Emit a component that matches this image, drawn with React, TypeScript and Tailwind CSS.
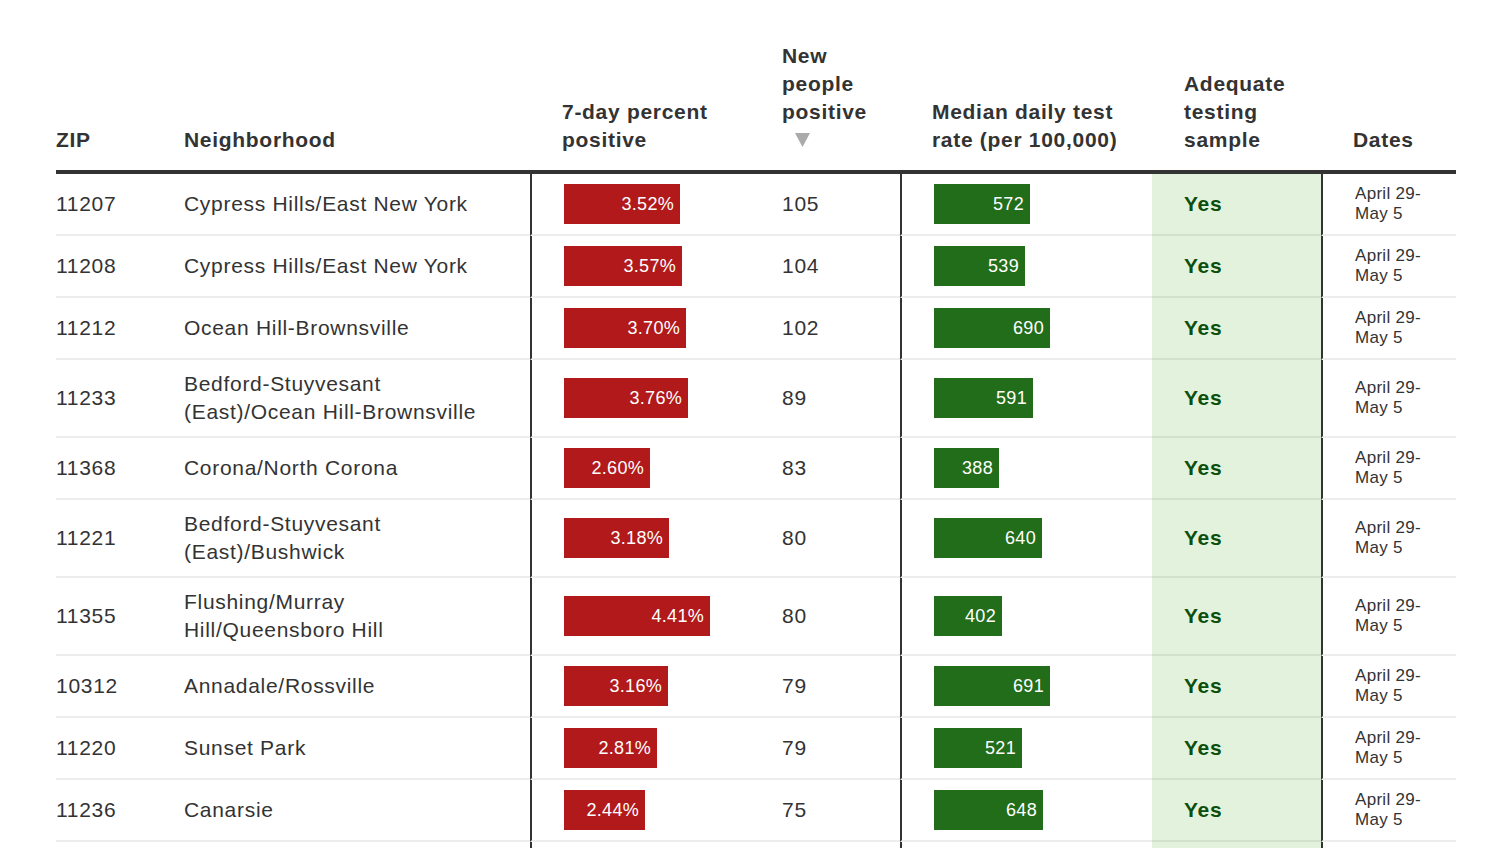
import React from "react";

type Row = {
  zip: string;
  hood: string[];
  pct: number;
  people: number;
  rate: number;
};

const rows: Row[] = [
  { zip: "11207", hood: ["Cypress Hills/East New York"], pct: 3.52, people: 105, rate: 572 },
  { zip: "11208", hood: ["Cypress Hills/East New York"], pct: 3.57, people: 104, rate: 539 },
  { zip: "11212", hood: ["Ocean Hill-Brownsville"], pct: 3.7, people: 102, rate: 690 },
  { zip: "11233", hood: ["Bedford-Stuyvesant", "(East)/Ocean Hill-Brownsville"], pct: 3.76, people: 89, rate: 591 },
  { zip: "11368", hood: ["Corona/North Corona"], pct: 2.6, people: 83, rate: 388 },
  { zip: "11221", hood: ["Bedford-Stuyvesant", "(East)/Bushwick"], pct: 3.18, people: 80, rate: 640 },
  { zip: "11355", hood: ["Flushing/Murray", "Hill/Queensboro Hill"], pct: 4.41, people: 80, rate: 402 },
  { zip: "10312", hood: ["Annadale/Rossville"], pct: 3.16, people: 79, rate: 691 },
  { zip: "11220", hood: ["Sunset Park"], pct: 2.81, people: 79, rate: 521 },
  { zip: "11236", hood: ["Canarsie"], pct: 2.44, people: 75, rate: 648 },
];

const cols = "grid w-[1400px] grid-cols-[128px_346px_220px_150px_252px_169px_135px]";
const font = { fontFamily: '"Liberation Sans", Arial, Helvetica, sans-serif' };

function Triangle() {
  return (
    <div className="h-7 flex items-center pl-[13px]">
      <svg width="15" height="14" viewBox="0 0 15 14">
        <path d="M0 0 L15 0 L7.5 14 Z" fill="#aaaaaa" />
      </svg>
    </div>
  );
}

export default function App() {
  const cell = "border-b-2 border-black/[0.07] py-[10px] flex items-center";
  return (
    <div className="bg-white w-[1496px] h-[848px] overflow-hidden pt-[42px] pl-[56px] text-[#333]" style={font}>
      <div className={`${cols} items-end border-b-4 border-[#333] font-bold text-[21px] leading-7 tracking-[0.7px]`}>
        <div className="pb-4">ZIP</div>
        <div className="pb-4">Neighborhood</div>
        <div className="pb-4 pl-8">
          7-day percent
          <br />
          positive
        </div>
        <div className="pb-4 pl-8">
          New
          <br />
          people
          <br />
          positive
          <Triangle />
        </div>
        <div className="pb-4 pl-8">
          Median daily test
          <br />
          rate (per 100,000)
        </div>
        <div className="pb-4 pl-8">
          Adequate
          <br />
          testing
          <br />
          sample
        </div>
        <div className="pb-4 pl-8">Dates</div>
      </div>
      {rows.map((r) => (
        <div key={r.zip} className={`${cols} text-[21px] leading-7 tracking-[0.7px]`}>
          <div className={cell}>{r.zip}</div>
          <div className={cell}>
            <div>
              {r.hood.map((l, i) => (
                <div key={i}>{l}</div>
              ))}
            </div>
          </div>
          <div className={`${cell} border-l-2 border-l-[#333] pl-8`}>
            <div
              className="h-10 bg-[#b1191b] text-white text-[18px] tracking-[0.3px] flex items-center justify-end pr-[6px]"
              style={{ width: Math.round(r.pct * 33) }}
            >
              {r.pct.toFixed(2)}%
            </div>
          </div>
          <div className={`${cell} pl-8`}>{r.people}</div>
          <div className={`${cell} border-l-2 border-l-[#333] pl-8`}>
            <div
              className="h-10 bg-[#216d1a] text-white text-[18px] tracking-[0.3px] flex items-center justify-end pr-[6px]"
              style={{ width: Math.round(r.rate / 5.95) }}
            >
              {r.rate}
            </div>
          </div>
          <div className={`${cell} bg-[#e3f2dc] pl-8 font-bold text-[#0c4f0c]`}>Yes</div>
          <div className={`${cell} border-l-2 border-l-[#333] pl-8`}>
            <div className="text-[17px] leading-5 tracking-[0.3px]">
              April 29-
              <br />
              May 5
            </div>
          </div>
        </div>
      ))}
      <div className={`${cols} h-10`}>
        <div />
        <div />
        <div className="border-l-2 border-l-[#333]" />
        <div />
        <div className="border-l-2 border-l-[#333]" />
        <div className="bg-[#e3f2dc]" />
        <div className="border-l-2 border-l-[#333]" />
      </div>
    </div>
  );
}
